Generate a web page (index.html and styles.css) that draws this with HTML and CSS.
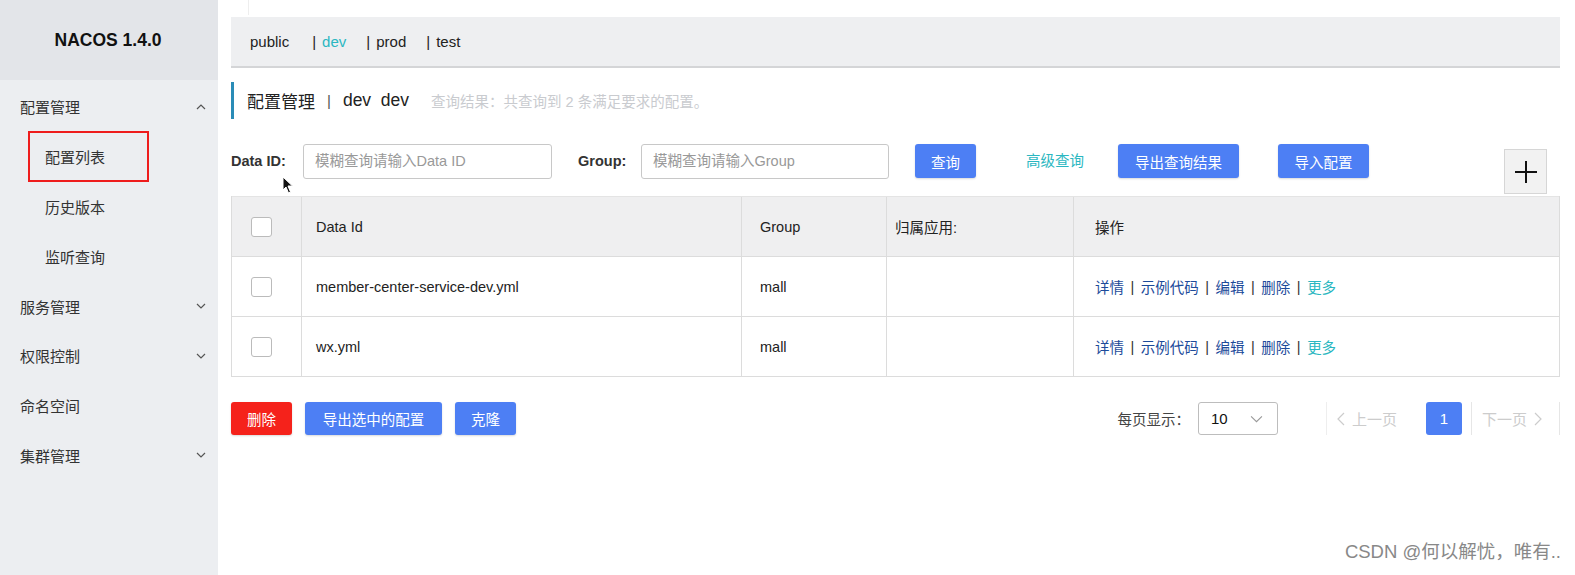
FILE: index.html
```html
<!DOCTYPE html>
<html>
<head>
<meta charset="utf-8">
<link rel="stylesheet" href="styles.css">
</head>
<body>
<div class="app">
  <aside class="sidebar">
    <div class="brand">NACOS 1.4.0</div>
    <ul class="menu">
      <li class="item top">配置管理<svg class="chev" viewBox="0 0 12 12"><path d="M2 8 L6 4 L10 8" fill="none" stroke="#555" stroke-width="1.2"/></svg></li>
      <li class="item sub boxed"><span class="mark">配置列表</span></li>
      <li class="item sub">历史版本</li>
      <li class="item sub">监听查询</li>
      <li class="item top">服务管理<svg class="chev" viewBox="0 0 12 12"><path d="M2 4 L6 8 L10 4" fill="none" stroke="#555" stroke-width="1.2"/></svg></li>
      <li class="item top">权限控制<svg class="chev" viewBox="0 0 12 12"><path d="M2 4 L6 8 L10 4" fill="none" stroke="#555" stroke-width="1.2"/></svg></li>
      <li class="item top">命名空间</li>
      <li class="item top">集群管理<svg class="chev" viewBox="0 0 12 12"><path d="M2 4 L6 8 L10 4" fill="none" stroke="#555" stroke-width="1.2"/></svg></li>
    </ul>
  </aside>
  <main class="main">
    <div class="topstrip"><div class="faint"></div></div>
    <div class="nsbar">
      <span class="ns">public</span>
      <span class="ns sep active">dev</span>
      <span class="ns sep">prod</span>
      <span class="ns sep">test</span>
    </div>
    <div class="title">
      <span class="title-main">配置管理</span>
      <span class="title-bar">|</span>
      <span class="title-ns">dev&nbsp;&nbsp;dev</span>
      <span class="title-info">查询结果：共查询到 2 条满足要求的配置。</span>
    </div>
    <div class="search">
      <label class="lbl">Data ID:</label>
      <div class="input w1">模糊查询请输入Data ID</div>
      <label class="lbl lbl2">Group:</label>
      <div class="input w2">模糊查询请输入Group</div>
      <button class="btn b-query">查询</button>
      <span class="adv">高级查询</span>
      <button class="btn b-export">导出查询结果</button>
      <button class="btn b-import">导入配置</button>
      <span class="spacer"></span>
      <button class="plus"><svg viewBox="0 0 24 24" width="24" height="24"><path d="M12 1 V23 M1 12 H23" stroke="#111" stroke-width="2"/></svg></button>
      <svg class="cursor" viewBox="0 0 12 18" width="12" height="18"><path d="M1 1 L1 14 L4 11 L6.5 17 L8.5 16 L6 10 L10.5 10 Z" fill="#111" stroke="#fff" stroke-width="1"/></svg>
    </div>
    <div class="table">
      <div class="row head">
        <div class="c c0"><span class="cb"></span></div>
        <div class="c c1">Data Id</div>
        <div class="c c2">Group</div>
        <div class="c c3">归属应用:</div>
        <div class="c c4">操作</div>
      </div>
      <div class="row">
        <div class="c c0"><span class="cb"></span></div>
        <div class="c c1">member-center-service-dev.yml</div>
        <div class="c c2">mall</div>
        <div class="c c3"></div>
        <div class="c c4 ops"><a>详情</a><i>|</i><a>示例代码</a><i>|</i><a>编辑</a><i>|</i><a>删除</a><i>|</i><a class="more">更多</a></div>
      </div>
      <div class="row">
        <div class="c c0"><span class="cb"></span></div>
        <div class="c c1">wx.yml</div>
        <div class="c c2">mall</div>
        <div class="c c3"></div>
        <div class="c c4 ops"><a>详情</a><i>|</i><a>示例代码</a><i>|</i><a>编辑</a><i>|</i><a>删除</a><i>|</i><a class="more">更多</a></div>
      </div>
    </div>
    <div class="footer">
      <button class="btn b-del">删除</button>
      <button class="btn b-exsel">导出选中的配置</button>
      <button class="btn b-clone">克隆</button>
      <span class="spacer"></span>
      <span class="per">每页显示：</span>
      <div class="select">10<svg viewBox="0 0 12 12" width="13" height="13"><path d="M1 4 L6 9 L11 4" fill="none" stroke="#999" stroke-width="1"/></svg></div>
      <div class="pager">
        <span class="pg prev"><svg viewBox="0 0 8 14" width="8" height="14"><path d="M7 1 L1 7 L7 13" fill="none" stroke="#ccc" stroke-width="1.2"/></svg>上一页</span>
        <span class="pg cur">1</span>
        <span class="pg next">下一页<svg viewBox="0 0 8 14" width="8" height="14"><path d="M1 1 L7 7 L1 13" fill="none" stroke="#ccc" stroke-width="1.2"/></svg></span>
      </div>
    </div>
    <div class="watermark">CSDN @何以解忧，唯有..</div>
  </main>
</div>
</body>
</html>
```

FILE: styles.css
```css
* { box-sizing: border-box; }
html, body { margin: 0; padding: 0; }
body {
  width: 1575px;
  height: 575px;
  overflow: hidden;
  font-family: "Liberation Sans", "Noto Sans CJK SC", sans-serif;
  font-size: 14px;
  color: #333;
  background: #fff;
}
.app { display: flex; height: 575px; }

.sidebar {
  width: 218px;
  flex: none;
  background: #eceef1;
}
.brand {
  height: 80px;
  background: #e3e5e9;
  display: flex;
  align-items: center;
  justify-content: center;
  font-weight: bold;
  font-size: 17.5px;
  color: #111;
  padding-right: 2px;
}
.menu { list-style: none; margin: 0; padding: 2px 0 0 0; }
.item {
  height: 49.8px;
  display: flex;
  align-items: center;
  font-size: 15px;
  color: #333;
}
.item.top { padding-left: 20px; padding-right: 11px; }
.item.sub { padding-left: 45px; }
.chev { width: 12px; height: 12px; margin-left: auto; }
.item.boxed { padding-left: 28px; }
.mark {
  display: flex;
  align-items: center;
  width: 121px;
  height: 51px;
  border: 2px solid #ee1c1c;
  padding-left: 15px;
}

.main {
  flex: 1;
  padding: 0 15px 0 13px;
  position: relative;
}
.topstrip { height: 17px; position: relative; }
.faint { width: 1px; height: 15px; margin-left: 17px; background: #eee; }
.nsbar {
  height: 51px;
  background: #eeeff1;
  border-bottom: 2px solid #d4d5d7;
  display: flex;
  align-items: center;
  padding-left: 19px;
  font-size: 15px;
  color: #222;
}
.ns.sep::before { content: "|"; margin-right: 6px; color: #222; }
.ns:first-child { margin-right: 23px; }
.ns.active { color: #2bb7c1; margin-right: 18px; }
.ns.active::before { color: #222; }
.ns.sep { margin-right: 20px; }

.title {
  margin-top: 14px;
  height: 37px;
  border-left: 3px solid #2a8cb7;
  display: flex;
  align-items: center;
  padding-left: 13px;
  font-size: 17px;
  color: #222;
}
.title-bar { margin: 0 12px; color: #555; font-size: 15px; }
.title-ns { font-size: 17.5px; }
.title-info { margin-left: 22px; font-size: 14.5px; color: #c9cbcf; }

.search {
  margin-top: 25px;
  height: 52px;
  display: flex;
  align-items: flex-start;
  position: relative;
}
.lbl {
  font-weight: bold;
  font-size: 14.5px;
  color: #333;
  height: 34px;
  line-height: 34px;
  width: 72px;
}
.lbl2 { width: 63px; margin-left: 26px; }
.input {
  height: 35px;
  border: 1px solid #c8c8c8;
  border-radius: 3px;
  line-height: 33px;
  padding-left: 11px;
  color: #999;
  font-size: 14.5px;
}
.w1 { width: 249px; }
.w2 { width: 248px; }
.btn {
  font-family: inherit;
  height: 34px;
  border: none;
  border-radius: 3px;
  background: #4d7ff4;
  color: #fff;
  font-size: 14.5px;
  padding: 0;
  box-shadow: 0 1px 2px rgba(0,0,0,0.15);
}
.b-query { width: 61px; margin-left: 26px; }
.adv { color: #2bb7c1; height: 34px; line-height: 34px; margin-left: 50px; width: 60px; font-size: 14.5px; }
.b-export { width: 121px; margin-left: 32px; }
.b-import { width: 91px; margin-left: 39px; }
.spacer { flex: 1; }
.plus {
  width: 43px;
  height: 45px;
  margin-top: 5px;
  margin-right: 13px;
  border: 1px solid #d6d6d6;
  background: #f2f2f2;
  padding: 0;
  display: flex;
  align-items: center;
  justify-content: center;
}
.cursor { position: absolute; left: 51px; top: 32px; }

.table {
  border: 1px solid #dcdcdc;
  border-top: none;
}
.row {
  display: flex;
  height: 60px;
  border-top: 1px solid #dcdcdc;
}
.row.head { background: #efeff0; border-top: 1px solid #e4e4e4; }
.c {
  display: flex;
  align-items: center;
  border-left: 1px solid #dcdcdc;
  padding-left: 14px;
  font-size: 14.5px;
  color: #222;
}
.c0 { width: 69px; border-left: none; padding-left: 19px; }
.c1 { width: 440px; }
.c2 { width: 145px; padding-left: 18px; }
.c3 { width: 187px; padding-left: 8px; }
.c4 { flex: 1; padding-left: 21px; }
.cb {
  width: 21px;
  height: 20px;
  border: 1px solid #bbb;
  border-radius: 3px;
  background: #fff;
}
.ops a { color: #1d4b9a; }
.ops a.more { color: #2bb7c1; }
.ops i { font-style: normal; color: #333; margin: 0 6.5px; }

.footer {
  margin-top: 25px;
  height: 33px;
  display: flex;
  align-items: center;
}
.btn.b-del { background: #f5221b; width: 61px; height: 33px; }
.b-exsel { width: 137px; height: 33px; margin-left: 13px; }
.b-clone { width: 61px; height: 33px; margin-left: 13px; }
.per { color: #444; font-size: 14.5px; margin-right: 8px; }
.select {
  width: 80px;
  height: 33px;
  border: 1px solid #bdbdbd;
  border-radius: 3px;
  display: flex;
  align-items: center;
  justify-content: space-between;
  padding: 0 14px 0 12px;
  font-size: 15px;
  color: #111;
}
.pager { display: flex; align-items: center; margin-left: 48px; }
.pg { display: flex; align-items: center; height: 33px; color: #ccc; font-size: 15px; gap: 7px; }
.prev { width: 90px; padding-left: 10px; border-left: 1px solid #eee; }
.cur {
  width: 36px;
  justify-content: center;
  background: #4d7ff4;
  color: #fff;
  border-radius: 3px;
  margin: 0 9px 0 10px;
}
.next { width: 89px; padding-left: 10px; border-left: 1px solid #e6e6e6; border-right: 1px solid #e6e6e6; }

.watermark {
  position: absolute;
  right: 14px;
  bottom: 12px;
  font-size: 18.5px;
  color: #888;
}
```
